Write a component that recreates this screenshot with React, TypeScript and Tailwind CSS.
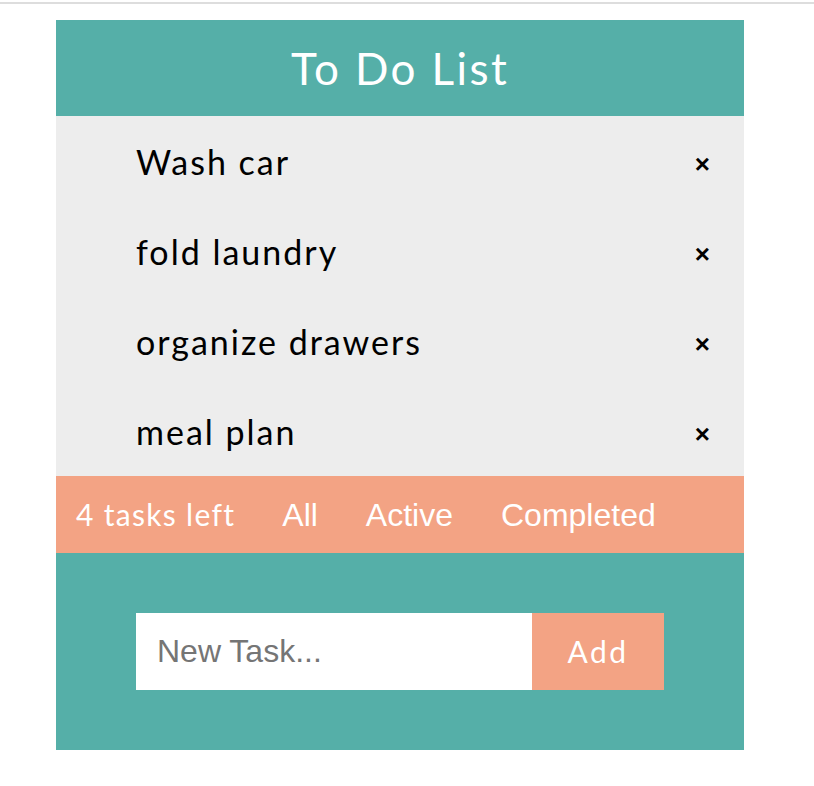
import React from "react";

const tasks = ["Wash car", "fold laundry", "organize drawers", "meal plan"];

export default function App() {
  return (
    <div className="min-h-[786px] bg-white">
      <div className="h-[2px] mt-[2px] bg-[#dddddd]" />
      <div className="ml-[56px] mt-[16px] w-[688px]">
        <div className="h-[96px] bg-[#55afa8] flex items-center justify-center text-white text-[44px] tracking-[2.4px] font-[Lato,sans-serif]">
          To Do List
        </div>
        <ul className="bg-[#ededed] font-[Lato,sans-serif]">
          {tasks.map((t) => (
            <li key={t} className="h-[90px] flex items-center pl-[80px] pr-[34px] text-[34px] tracking-[2px] text-black">
              <span className="flex-1">{t}</span>
              <span className="mt-[5px] text-[26px] font-bold font-['Liberation_Sans',Arial,sans-serif] leading-none tracking-normal">×</span>
            </li>
          ))}
        </ul>
        <div className="h-[77px] bg-[#f3a384] flex items-center pl-[20px] text-white">
          <span className="text-[30px] tracking-[1.3px] font-[Lato,sans-serif] mr-[47px]">4 tasks left</span>
          <div className="flex gap-[48px] text-[32px] font-['Liberation_Sans',Arial,sans-serif]">
            <button>All</button>
            <button>Active</button>
            <button>Completed</button>
          </div>
        </div>
        <div className="h-[197px] bg-[#55afa8] pt-[60px] pl-[80px]">
          <div className="flex h-[77px] w-[528px]">
            <input
              placeholder="New Task..."
              className="w-[396px] h-full bg-white pl-[21px] text-[32px] font-['Liberation_Sans',Arial,sans-serif] placeholder:text-[#757575] outline-none"
            />
            <button className="w-[132px] h-full bg-[#f3a384] text-white text-[30px] tracking-[2.5px] font-[Lato,sans-serif]">
              Add
            </button>
          </div>
        </div>
      </div>
    </div>
  );
}
